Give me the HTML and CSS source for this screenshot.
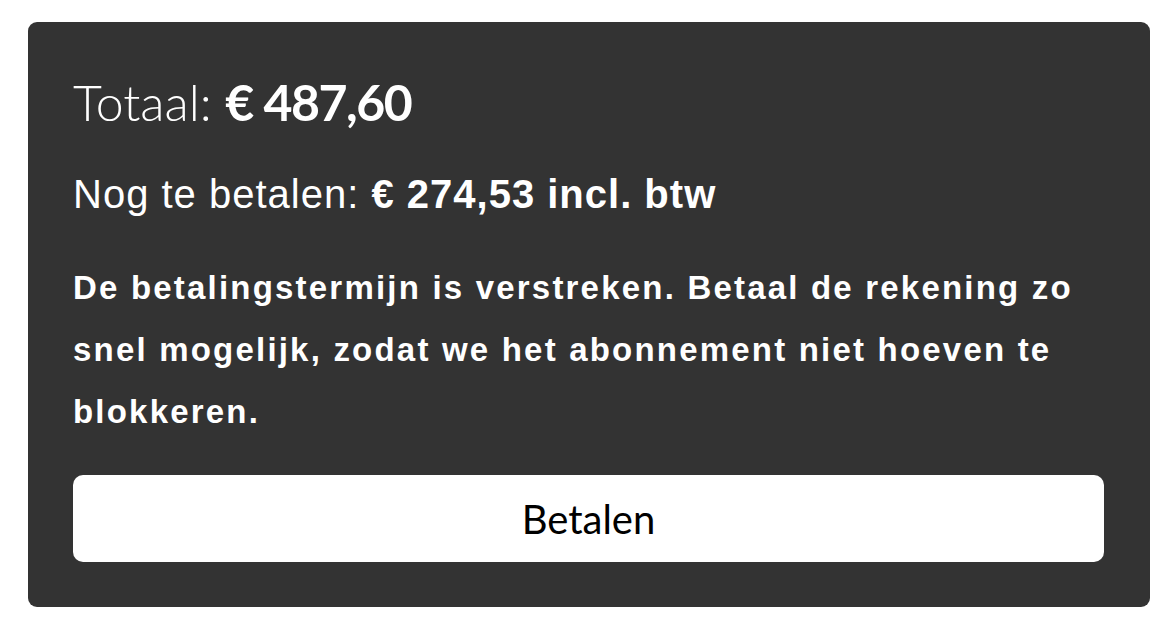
FILE: index.html
```html
<!DOCTYPE html>
<html lang="nl">

<head>
    <meta charset="UTF-8">
    <meta name="viewport" content="width=device-width, initial-scale=1.0">
    <title>Rekening</title>
    <link rel="stylesheet" href="styles.css">
</head>

<body>
    <main class="invoice-card">
        <h1 class="total">Totaal: <strong>€ 487,60</strong></h1>
        <p class="due">Nog te betalen: <strong>€ 274,53 incl. btw</strong></p>
        <p class="warning">De betalingstermijn is verstreken. Betaal de rekening zo snel mogelijk, zodat we het abonnement niet hoeven te blokkeren.</p>
        <button class="pay-button" type="button">Betalen</button>
    </main>
</body>

</html>
```

FILE: styles.css
```css
* {
    margin: 0;
    padding: 0;
    box-sizing: border-box;
}

body {
    background-color: #fff;
    font-family: "Liberation Sans", Arial, sans-serif;
    color: #fff;
}

.invoice-card {
    display: flex;
    flex-direction: column;
    margin: 22px 26px 28px 28px;
    padding: 50px 46px 45px 45px;
    background-color: #333;
    border-radius: 9px;
}

.total {
    font-family: Lato, sans-serif;
    font-weight: 300;
    font-size: 50px;
    line-height: 60px;
}

.total strong {
    font-weight: 700;
    letter-spacing: -1.5px;
}

.due {
    margin-top: 38px;
    font-size: 40px;
    line-height: 48px;
    letter-spacing: 1px;
}

.warning {
    margin-top: 39px;
    font-size: 33px;
    font-weight: bold;
    line-height: 62px;
    letter-spacing: 2.2px;
}

.pay-button {
    margin-top: 32px;
    height: 87px;
    border: none;
    border-radius: 10px;
    background-color: #fff;
    color: #000;
    font-family: Lato, sans-serif;
    font-size: 40px;
    cursor: pointer;
}
```
